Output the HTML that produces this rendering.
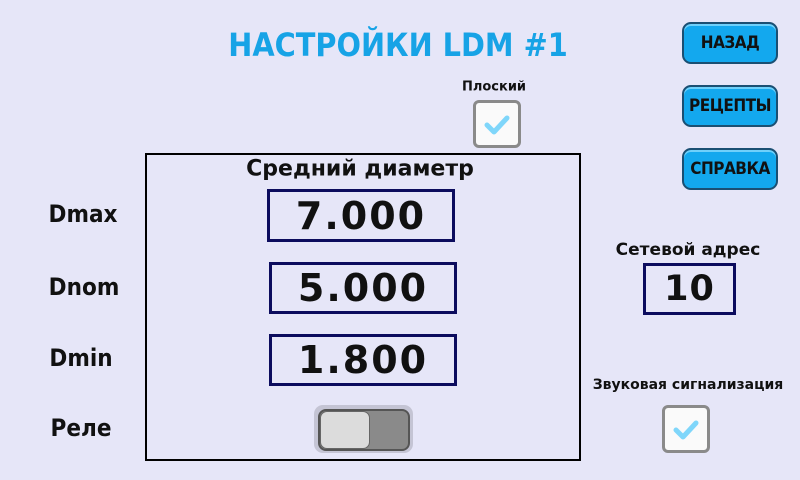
<!DOCTYPE html>
<html><head><meta charset="utf-8"><style>
body{margin:0;width:800px;height:480px;background:#e6e6f8;position:relative;overflow:hidden;font-family:"DejaVu Sans","Liberation Sans",sans-serif;font-weight:bold;color:#111}
.a{position:absolute}
.t{position:absolute;white-space:nowrap;transform:translate(-50%,-50%)}
.c{font-family:"DejaVu Sans Condensed","DejaVu Sans",sans-serif;font-stretch:condensed}
.btn{position:absolute;left:682px;width:92px;height:38px;background:#13a8ee;border:2px solid #1a4f73;border-radius:9px;box-shadow:inset 0 2px 0 #6fd0fa;font-size:17px;display:flex;align-items:center;justify-content:center;color:#111;font-family:"DejaVu Sans Condensed","DejaVu Sans",sans-serif;font-stretch:condensed;letter-spacing:-0.5px}
.box{position:absolute;border:3px solid #0c0c5e;box-sizing:border-box;font-size:38px;letter-spacing:2px;display:flex;align-items:center;justify-content:center}
.cb{position:absolute;width:42px;height:42px;border:3px solid #8a8a8a;border-radius:6px;background:#fafafa}
.l{font-size:24px}
</style></head><body>
<div class="t c" style="left:398px;top:45px;font-size:32px;color:#17a3e6">НАСТРОЙКИ LDM #1</div>
<div class="btn" style="top:22px">НАЗАД</div>
<div class="btn" style="top:85px">РЕЦЕПТЫ</div>
<div class="btn" style="top:148px">СПРАВКА</div>
<div class="t" style="left:494px;top:87px;font-size:13px">Плоский</div>
<div class="cb" style="left:473px;top:100px"><svg width="42" height="42"><path d="M11 22 L18 29 L31 15" stroke="#7fd6fa" stroke-width="5" fill="none" stroke-linecap="round" stroke-linejoin="round"/></svg></div>
<div class="a" style="left:145px;top:153px;width:432px;height:304px;border:2px solid #000"></div>
<div class="t" style="left:360px;top:169px;font-size:22px">Средний диаметр</div>
<div class="box" style="left:267px;top:189px;width:188px;height:53px">7.000</div>
<div class="box" style="left:269px;top:262px;width:188px;height:52px">5.000</div>
<div class="box" style="left:269px;top:334px;width:188px;height:52px">1.800</div>
<div class="a" style="left:314px;top:405px;width:99px;height:48px;background:#c4c4d4;border-radius:9px"></div>
<div class="a" style="left:318px;top:409px;width:88px;height:38px;background:#8a8a8a;border:2px solid #555;border-radius:8px"></div>
<div class="a" style="left:320px;top:411px;width:48px;height:36px;background:#dcdcdc;border-radius:7px;border:1px solid #666"></div>
<div class="t c l" style="left:83px;top:214px">Dmax</div>
<div class="t c l" style="left:84px;top:287px">Dnom</div>
<div class="t c l" style="left:81px;top:358px">Dmin</div>
<div class="t c l" style="left:81px;top:428px">Реле</div>
<div class="t" style="left:688px;top:250px;font-size:17px">Сетевой адрес</div>
<div class="box" style="left:643px;top:263px;width:93px;height:52px;font-size:35px;letter-spacing:1px">10</div>
<div class="t" style="left:688px;top:385px;font-size:14px">Звуковая сигнализация</div>
<div class="cb" style="left:662px;top:405px"><svg width="42" height="42"><path d="M11 22 L18 29 L31 15" stroke="#7fd6fa" stroke-width="5" fill="none" stroke-linecap="round" stroke-linejoin="round"/></svg></div>
</body></html>
